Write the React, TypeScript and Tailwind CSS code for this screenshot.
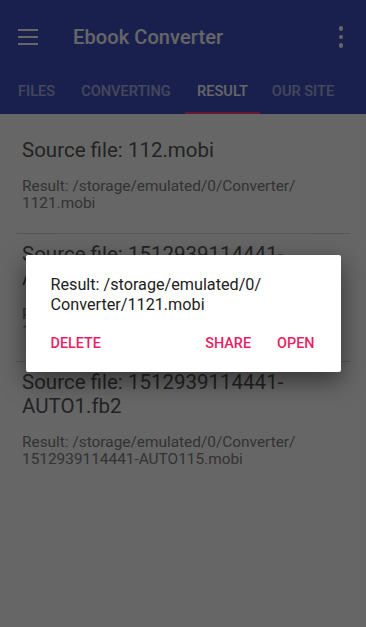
import React from "react";

const results = [
  { source: "112.mobi", result: ["Result: /storage/emulated/0/Converter/", "1121.mobi"] },
  { source: "1512939114441-AUTO1.fb2", result: ["Result: /storage/emulated/0/Converter/", "1512939114441-AUTO115.mobi"] },
  { source: "1512939114441-AUTO1.fb2", result: ["Result: /storage/emulated/0/Converter/", "1512939114441-AUTO115.mobi"] },
];

const tabs = ["FILES", "CONVERTING", "RESULT", "OUR SITE"];

export default function App() {
  return (
    <div className="relative w-[366px] h-[627px] overflow-hidden bg-white" style={{ fontFamily: "Roboto, 'Noto Sans', sans-serif" }}>
      {/* App bar */}
      <div className="bg-[#4152c4] text-white">
        <div className="flex items-center h-[66px] pt-[8px]">
          <div className="w-[73px] pl-[18px] flex flex-col gap-[4.5px]">
            <span className="block w-[20px] h-[2.5px] bg-white" />
            <span className="block w-[20px] h-[2.5px] bg-white" />
            <span className="block w-[20px] h-[2.5px] bg-white" />
          </div>
          <div className="flex-1 text-[20px] font-medium tracking-[0.1px]">Ebook Converter</div>
          <div className="w-[46px] flex flex-col items-center gap-[4px] pr-[4px]">
            <span className="block w-[4.5px] h-[4.5px] rounded-full bg-white" />
            <span className="block w-[4.5px] h-[4.5px] rounded-full bg-white" />
            <span className="block w-[4.5px] h-[4.5px] rounded-full bg-white" />
          </div>
        </div>
        <div className="flex h-[48px] text-[14.6px] font-medium">
          {tabs.map((t, i) => (
            <div
              key={t}
              className={
                "flex flex-col justify-between " +
                (i === 0 ? "w-[67px] pl-[18px]" : i === 1 ? "w-[118px] items-center" : i === 2 ? "w-[75px] items-center" : "w-[86px] items-center")
              }
            >
              <span className={"pt-[15px] " + (i === 2 ? "text-white" : "text-white/55")}>{t}</span>
              {i === 2 ? <span className="block w-full h-[2.5px] bg-[#ff4081]" /> : <span />}
            </div>
          ))}
        </div>
      </div>

      {/* List */}
      <div className="pt-[16px] px-[16px]">
        {results.map((r, i) => (
          <div key={i} className={"pt-[8px] pb-[20px] " + (i < results.length - 1 ? "border-b border-[#d6d6d6]" : "")}>
            <div className="pl-[6px] text-[20.5px] leading-[24.5px] text-[#595959] pr-[50px]">Source file: {r.source}</div>
            <div className="pl-[6px] mt-[15px] text-[15.4px] leading-[17.5px] text-[#808080]">
              {r.result.map((l) => (
                <div key={l}>{l}</div>
              ))}
            </div>
          </div>
        ))}
      </div>

      {/* Dim overlay + dialog */}
      <div className="absolute inset-0 bg-black/60 flex items-center justify-center">
        <div className="w-[315px] h-[117px] bg-white rounded-[2px] shadow-[0_8px_24px_rgba(0,0,0,0.5)] flex flex-col">
          <div className="pl-[25px] pr-[20px] pt-[20px] text-[16.2px] leading-[19.5px] text-[#212121]">
            <div>Result: /storage/emulated/0/</div>
            <div>Converter/1121.mobi</div>
          </div>
          <div className="flex items-center mt-[19px] pl-[25px] pr-[26px] text-[14.4px] font-medium text-[#e91e63]">
            <span>DELETE</span>
            <span className="ml-auto">SHARE</span>
            <span className="ml-[26px]">OPEN</span>
          </div>
        </div>
      </div>
    </div>
  );
}
